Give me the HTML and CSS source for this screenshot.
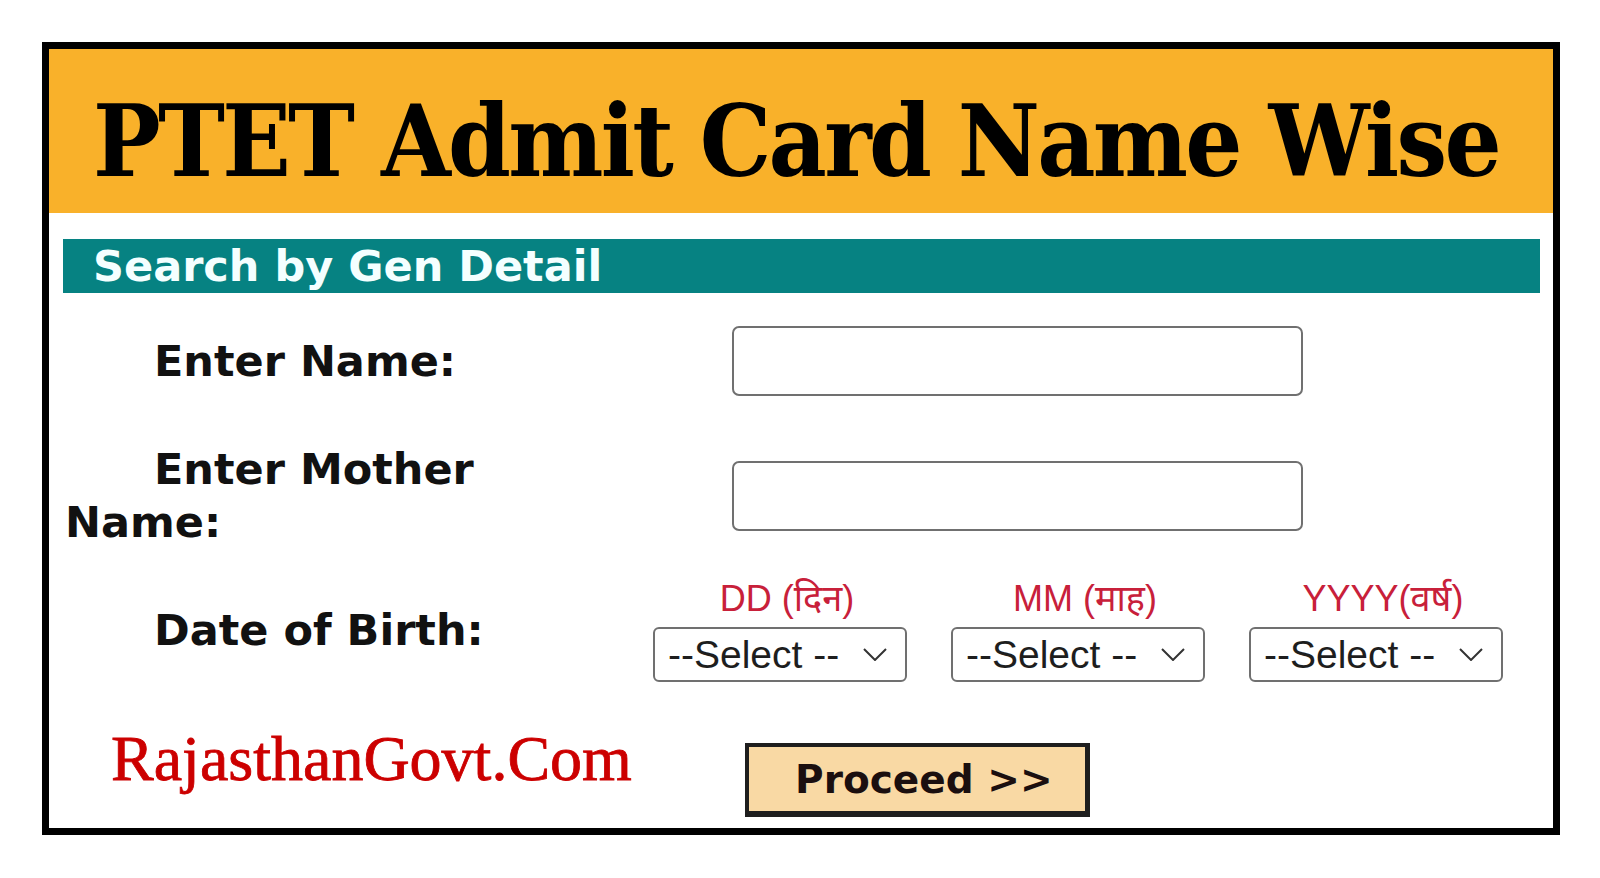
FILE: index.html
```html
<!DOCTYPE html>
<html lang="en">
<head>
<meta charset="utf-8">
<title>PTET Admit Card Name Wise</title>
<link rel="stylesheet" href="styles.css">
</head>
<body>
<div class="card">
  <header class="banner">PTET Admit Card Name Wise</header>
  <div class="bar">Search by Gen Detail</div>
  <form class="form">
    <div class="row row-text row-name">
      <label class="lbl">Enter Name:</label>
      <input class="txt" type="text">
    </div>
    <div class="row row-text row-mother">
      <label class="lbl">Enter Mother Name:</label>
      <input class="txt" type="text">
    </div>
    <div class="row row-dob">
      <label class="lbl">Date of Birth:</label>
      <div class="dob">
        <div class="dfield">
          <span class="dlabel">DD (दिन)</span>
          <div class="sel">
            <select><option>--Select --</option></select>
            <svg class="chev" viewBox="0 0 24 13" width="24" height="13"><path d="M1 1 L12 12 L23 1" fill="none" stroke="#333" stroke-width="2"/></svg>
          </div>
        </div>
        <div class="dfield">
          <span class="dlabel">MM (माह)</span>
          <div class="sel">
            <select><option>--Select --</option></select>
            <svg class="chev" viewBox="0 0 24 13" width="24" height="13"><path d="M1 1 L12 12 L23 1" fill="none" stroke="#333" stroke-width="2"/></svg>
          </div>
        </div>
        <div class="dfield">
          <span class="dlabel">YYYY(वर्ष)</span>
          <div class="sel">
            <select><option>--Select --</option></select>
            <svg class="chev" viewBox="0 0 24 13" width="24" height="13"><path d="M1 1 L12 12 L23 1" fill="none" stroke="#333" stroke-width="2"/></svg>
          </div>
        </div>
      </div>
    </div>
    <div class="row row-submit">
      <div class="brand">RajasthanGovt.Com</div>
      <button class="proceed" type="button">Proceed &gt;&gt;</button>
    </div>
  </form>
</div>
</body>
</html>
```

FILE: styles.css
```css
html, body {
  margin: 0;
  padding: 0;
  background: #ffffff;
}
body {
  padding: 42px 0 0 42px;
}
.card {
  width: 1504px;
  border: 7px solid #000;
  background: #fff;
}
.banner {
  box-sizing: border-box;
  height: 164px;
  padding: 21px 10px 0 0;
  line-height: 142px;
  background: #f9b12a;
  text-align: center;
  font-family: "DejaVu Serif Condensed", "DejaVu Serif", "Liberation Serif", serif;
  font-weight: bold;
  font-size: 100px;
  letter-spacing: -2.7px;
  color: #000;
  white-space: nowrap;
  overflow: hidden;
}
.bar {
  margin: 26px 13px 0 14px;
  height: 54px;
  line-height: 54px;
  padding-left: 30px;
  background: #068282;
  color: #f4ffff;
  font-family: "DejaVu Sans", Verdana, sans-serif;
  font-weight: bold;
  font-size: 43px;
  white-space: nowrap;
}
.form {
  margin: 0;
  padding: 0 0 11px 16px;
}
.row {
  display: flex;
  align-items: center;
}
.lbl {
  font-family: "DejaVu Sans", Verdana, sans-serif;
  font-weight: bold;
  font-size: 43px;
  line-height: 53px;
  color: #111;
  text-indent: 89px;
}
.row-text .lbl {
  flex: 0 0 480px;
  margin-right: 187px;
}
.row-name {
  margin-top: 33px;
}
.row-mother {
  margin-top: 47px;
}
.txt {
  box-sizing: border-box;
  width: 571px;
  height: 70px;
  margin: 0;
  border: 2px solid #707070;
  border-radius: 7px;
  background: #fff;
}
.row-dob {
  margin-top: 30px;
}
.row-dob .lbl {
  flex: 0 0 588px;
}
.dob {
  display: flex;
  gap: 44px;
}
.dfield {
  width: 254px;
  display: flex;
  flex-direction: column;
  align-items: center;
}
.dlabel {
  font-family: "Liberation Sans", "Noto Sans Devanagari", "Lohit Devanagari", "Noto Sans", sans-serif;
  font-size: 36px;
  line-height: 40px;
  color: #c8203a;
  padding-left: 14px;
  margin-bottom: 8px;
  white-space: nowrap;
}
.sel {
  position: relative;
  width: 254px;
  height: 55px;
}
.sel select {
  appearance: none;
  -webkit-appearance: none;
  box-sizing: border-box;
  width: 100%;
  height: 100%;
  margin: 0;
  padding: 0 0 0 13px;
  border: 2px solid #707070;
  border-radius: 6px;
  background: #fff;
  font-family: "Liberation Sans", Arial, sans-serif;
  font-size: 39px;
  color: #1e1e1e;
}
.chev {
  position: absolute;
  right: 20px;
  top: 21px;
  pointer-events: none;
}
.row-submit {
  margin-top: 45px;
  align-items: flex-start;
}
.brand {
  margin-left: 46px;
  font-family: "Liberation Serif", "Times New Roman", serif;
  font-size: 64px;
  line-height: 63px;
  color: #cc0000;
  -webkit-text-stroke: 0.8px #cc0000;
  white-space: nowrap;
}
.proceed {
  box-sizing: border-box;
  margin: 16px 0 0 113px;
  width: 345px;
  height: 74px;
  padding: 0 0 0 14px;
  border: 4px solid #1e1e1e;
  border-bottom-width: 6px;
  border-right-width: 5px;
  background: #f9d9a4;
  font-family: "DejaVu Sans", Verdana, sans-serif;
  font-weight: bold;
  font-size: 39px;
  color: #1b0f0f;
  cursor: pointer;
}
```
